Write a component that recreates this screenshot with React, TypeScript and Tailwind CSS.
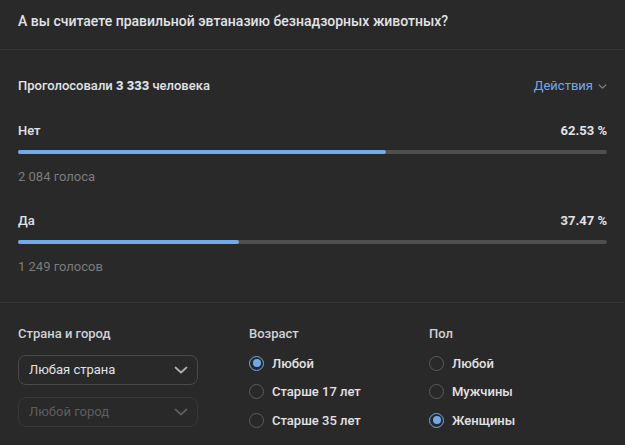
import React from "react";

const font = { fontFamily: "Roboto, 'Noto Sans', sans-serif" };

function Chevron({ className }: { className?: string }) {
  return (
    <svg className={className} width="14" height="8" viewBox="0 0 14 8" fill="none">
      <path d="M1.5 1.5L7 6.5L12.5 1.5" stroke="currentColor" strokeWidth="1.7" strokeLinecap="round" strokeLinejoin="round" />
    </svg>
  );
}

function Radio({ label, checked }: { label: string; checked?: boolean }) {
  return (
    <div className="flex h-[28.5px] items-center gap-[8px]">
      {checked ? (
        <div className="flex h-[15px] w-[15px] items-center justify-center rounded-full border-[1.5px] border-[#71aaeb]">
          <div className="h-[8px] w-[8px] rounded-full bg-[#71aaeb]" />
        </div>
      ) : (
        <div className="h-[15px] w-[15px] rounded-full border-[1.5px] border-[#5c5c5c]" />
      )}
      <span className="text-[13px] font-medium text-[#e1e3e6]">{label}</span>
    </div>
  );
}

function Option({ label, pct, votes, width }: { label: string; pct: string; votes: string; width: number }) {
  return (
    <div className="flex flex-col">
      <div className="flex h-[20px] items-center justify-between text-[13px] text-[#e1e3e6]">
        <span className="font-medium">{label}</span>
        <span className="font-bold">{pct}</span>
      </div>
      <div className="mt-[9px] h-[4px] w-full rounded-full bg-[#4f4f4f]">
        <div className="h-full rounded-full bg-[#71aaeb]" style={{ width: `${width}%` }} />
      </div>
      <div className="mt-[13px] flex h-[20px] items-center text-[13px] text-[#7c7c7c]">{votes}</div>
    </div>
  );
}

export default function App() {
  return (
    <div className="h-[445px] w-[625px] overflow-hidden bg-[#292929]" style={font}>
      <div className="h-[50px] border-b border-[#363636] px-[18px] pt-[11px]">
        <div className="text-[14px] font-medium leading-[20px] text-[#e1e3e6]">
          А вы считаете правильной эвтаназию безнадзорных животных?
        </div>
      </div>
      <div className="h-[253px] border-b border-[#363636] px-[18px] pt-[26px]">
        <div className="flex h-[20px] items-center justify-between text-[13px]">
          <span className="font-medium text-[#e1e3e6]">
            Проголосовали <span className="font-extrabold">3 333</span> человека
          </span>
          <span className="flex items-center gap-[5px] text-[#71aaeb]">
            Действия
            <Chevron className="h-[5px] w-[9px] text-[#8c8c8c]" />
          </span>
        </div>
        <div className="mt-[25px] flex flex-col gap-[24px]">
          <Option label="Нет" pct="62.53 %" votes="2 084 голоса" width={62.53} />
          <Option label="Да" pct="37.47 %" votes="1 249 голосов" width={37.47} />
        </div>
      </div>
      <div className="flex px-[18px] pt-[21px]">
        <div className="w-[231px]">
          <div className="flex h-[20px] items-center text-[13px] font-medium text-[#d0d2d5]">Страна и город</div>
          <div className="mt-[11px] flex h-[30px] w-[180px] items-center justify-between rounded-[8px] border border-[#4a4a4a] pl-[10px] pr-[9px] text-[13px] text-[#e1e3e6]">
            <span>Любая страна</span>
            <Chevron className="text-[#b0b0b0]" />
          </div>
          <div className="mt-[12px] flex h-[30px] w-[180px] items-center justify-between rounded-[8px] border border-[#383838] pl-[10px] pr-[9px] text-[13px] text-[#5e5e5e]">
            <span>Любой город</span>
            <Chevron className="text-[#5e5e5e]" />
          </div>
        </div>
        <div className="w-[180px]">
          <div className="flex h-[20px] items-center text-[13px] font-medium text-[#d0d2d5]">Возраст</div>
          <div className="mt-[5px] flex flex-col">
            <Radio label="Любой" checked />
            <Radio label="Старше 17 лет" />
            <Radio label="Старше 35 лет" />
          </div>
        </div>
        <div>
          <div className="flex h-[20px] items-center text-[13px] font-medium text-[#d0d2d5]">Пол</div>
          <div className="mt-[5px] flex flex-col">
            <Radio label="Любой" />
            <Radio label="Мужчины" />
            <Radio label="Женщины" checked />
          </div>
        </div>
      </div>
    </div>
  );
}
